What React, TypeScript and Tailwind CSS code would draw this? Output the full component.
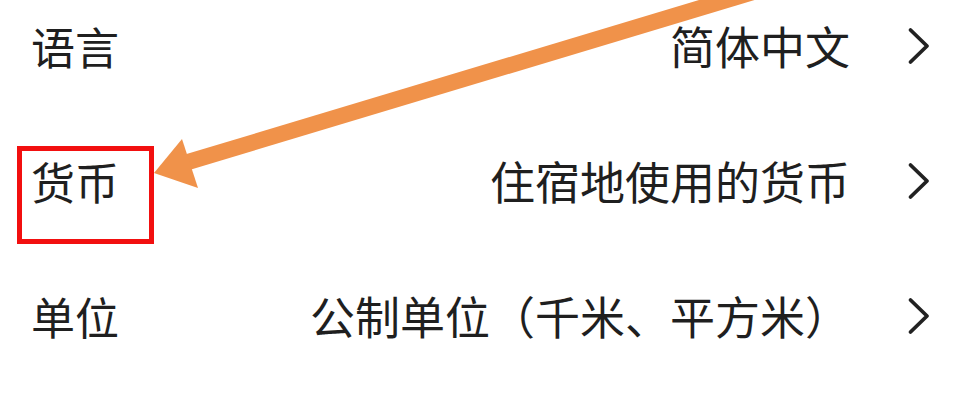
import React from "react";

const rows = [
  { label: "语言", value: "简体中文" },
  { label: "货币", value: "住宿地使用的货币" },
  { label: "单位", value: "公制单位（千米、平方米）" },
];

function Chevron() {
  return (
    <svg width="24" height="38" viewBox="0 0 24 38" className="shrink-0">
      <polyline
        points="3.5,3 20,19 3.5,35"
        fill="none"
        stroke="#222222"
        strokeWidth="3.8"
        strokeLinecap="round"
        strokeLinejoin="round"
      />
    </svg>
  );
}

export default function App() {
  return (
    <div
      className="relative w-[979px] h-[405px] overflow-hidden bg-white text-[#1f1f1f]"
      style={{ fontFamily: '"Noto Sans CJK SC", "Noto Sans", sans-serif' }}
    >
      <div className="flex flex-col gap-[90px] pt-[23px] pl-[31px] pr-[48px]">
        {rows.map((r) => (
          <div key={r.label} className="flex items-center justify-between">
            <span className="text-[44px] leading-none">{r.label}</span>
            <div className="flex items-center gap-[57px]">
              <span className="text-[45px] leading-none">{r.value}</span>
              <Chevron />
            </div>
          </div>
        ))}
      </div>

      <div className="absolute left-[17px] top-[146px] w-[137px] h-[98px] border-[5px] border-[#f20f0f]" />

      <svg
        className="absolute left-0 top-0 pointer-events-none"
        width="979"
        height="405"
        viewBox="0 0 979 405"
      >
        <line x1="188" y1="162" x2="790" y2="-19" stroke="#f0924a" strokeWidth="16" />
        <polygon points="154,173 182,139 198,188" fill="#f0924a" />
      </svg>
    </div>
  );
}
